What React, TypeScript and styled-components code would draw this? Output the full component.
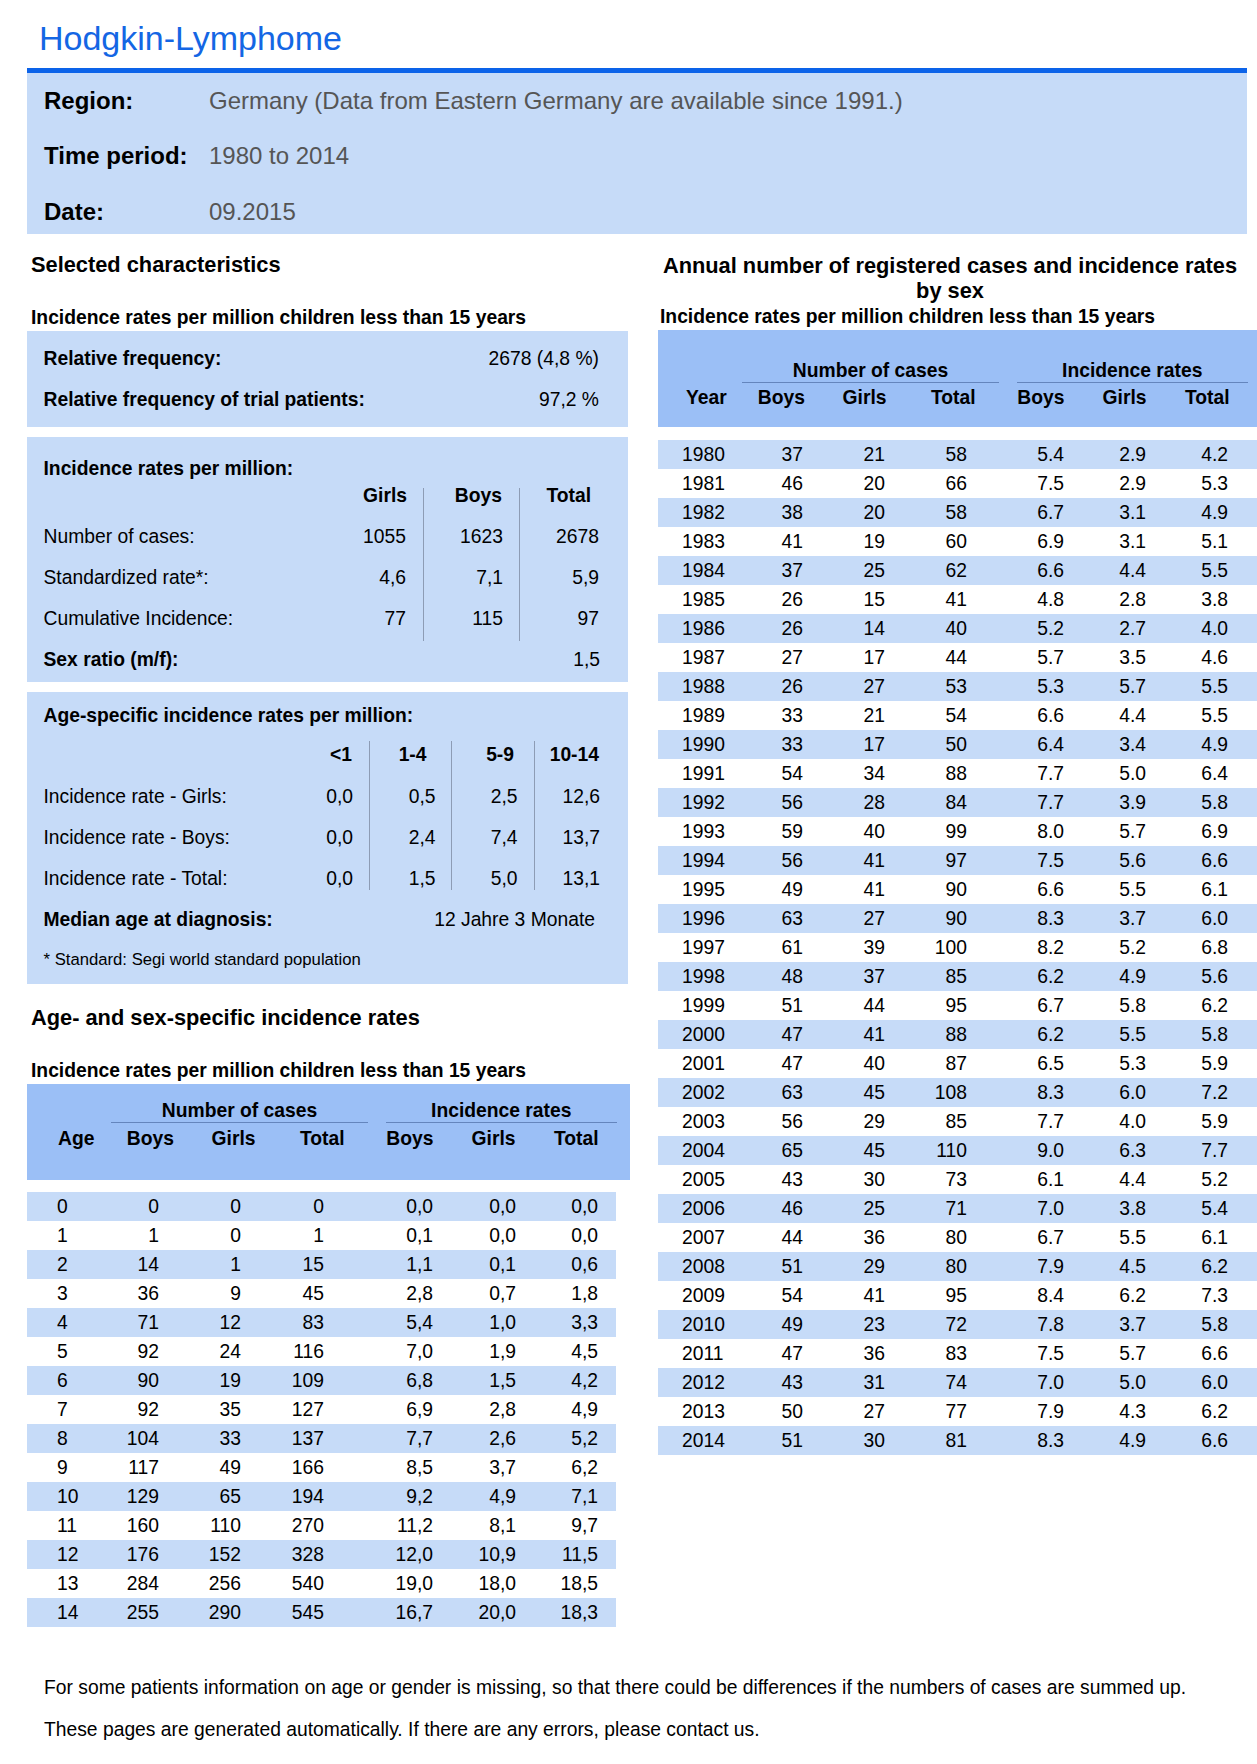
import React from "react";
import styled, { createGlobalStyle } from "styled-components";

const C = {
  light: "#c6dbf8",
  mid: "#9bbff6",
  blue: "#1466e4",
  rule: "#0c63e9",
  gray: "#555555",
  divider: "#8d9cb5",
  underline: "#6485bd",
};

const GlobalStyle = createGlobalStyle`
  html, body { margin: 0; padding: 0; overflow: hidden; background: #ffffff; }
  body { font-family: "Liberation Sans", Arial, Helvetica, sans-serif; color: #000; }
  * { box-sizing: border-box; }
`;

const Page = styled.div`
  width: 1257px;
  padding-left: 27px;
`;

const Title = styled.h1`
  margin: 18px 0 10px 12px;
  font-size: 34px;
  line-height: 40px;
  font-weight: 400;
  color: ${C.blue};
`;

const InfoBand = styled.section`
  width: 1220px;
  height: 166px;
  border-top: 5px solid ${C.rule};
  background: ${C.light};
  padding: 0 0 0 17px;
  display: grid;
  grid-template-columns: 165px 1fr;
  grid-auto-rows: 55.5px;
  align-items: center;
`;

const InfoLabel = styled.div`
  font-size: 24px;
  line-height: 28px;
  font-weight: 700;
`;

const InfoValue = styled.div`
  font-size: 24px;
  line-height: 28px;
  color: ${C.gray};
`;

const Columns = styled.div`
  display: flex;
  gap: 30px;
  align-items: flex-start;
`;

const LeftCol = styled.div`
  width: 601px;
  display: flex;
  flex-direction: column;
`;

const RightCol = styled.div`
  width: 584px;
  display: flex;
  flex-direction: column;
`;

const SectionTitle = styled.h2<{ $mt: number }>`
  margin: ${(p) => p.$mt}px 0 0;
  padding-left: 4px;
  font-size: 21.8px;
  line-height: 26px;
  font-weight: 700;
`;

const CenteredTitle = styled.h2`
  margin: 18.5px 0 0;
  font-size: 21.8px;
  line-height: 25px;
  font-weight: 700;
  text-align: center;
`;

const SubTitle = styled.h3<{ $mt: number; $pl: number }>`
  margin: ${(p) => p.$mt}px 0 0;
  padding-left: ${(p) => p.$pl}px;
  font-size: 19.3px;
  line-height: 24px;
  font-weight: 700;
  white-space: nowrap;
`;

const Panel = styled.div<{ $mt: number; $pt: number; $pb: number }>`
  margin-top: ${(p) => p.$mt}px;
  background: ${C.light};
  padding: ${(p) => p.$pt}px 28px ${(p) => p.$pb}px 16.5px;
  font-size: 19.3px;
`;

const PanelHeading = styled.div<{ $mb: number }>`
  font-weight: 700;
  line-height: 27px;
  margin-bottom: ${(p) => p.$mb}px;
`;

const FreqGrid = styled.div`
  display: grid;
  grid-template-columns: 1fr auto;
  grid-auto-rows: 41px;
  align-items: center;
  line-height: 24px;
`;

const BoldLabel = styled.div`
  font-weight: 700;
`;

const FreqValue = styled.div`
  text-align: right;
  padding-right: 1px;
`;

const StatGrid = styled.div<{ $cols: string; $rows: string }>`
  display: grid;
  grid-template-columns: ${(p) => p.$cols};
  grid-template-rows: ${(p) => p.$rows};
  line-height: 24px;
`;

const HeadCell = styled.div<{ $pad: number }>`
  align-self: start;
  line-height: 28px;
  font-weight: 700;
  text-align: right;
  padding-right: ${(p) => p.$pad}px;
`;

const BlankCell = styled.div``;

const RowLabel = styled.div<{ $bold?: boolean }>`
  align-self: center;
  font-weight: ${(p) => (p.$bold ? 700 : 400)};
  white-space: nowrap;
`;

const NumCell = styled.div<{ $pad: number; $col?: string }>`
  align-self: center;
  text-align: right;
  padding-right: ${(p) => p.$pad}px;
  white-space: nowrap;
  ${(p) => (p.$col ? `grid-column: ${p.$col};` : "")}
`;

const Divider = styled.div<{ $col: number; $span: number; $top: number; $bottom: number }>`
  grid-column: ${(p) => p.$col};
  grid-row: 1 / span ${(p) => p.$span};
  width: 1px;
  background: ${C.divider};
  margin-top: ${(p) => p.$top}px;
  margin-bottom: ${(p) => p.$bottom}px;
`;

const Footnote = styled.div`
  grid-column: 1 / -1;
  align-self: center;
  font-size: 16.7px;
  line-height: 22px;
`;

/* ---------- data tables ---------- */

const HEAD_COLS = "90px 57px 81.5px 89px 89px 82px 83px";

const TableHead = styled.div<{ $mt: number; $pt: number; $h: number; $w: number }>`
  margin-top: ${(p) => p.$mt}px;
  width: ${(p) => p.$w}px;
  height: ${(p) => p.$h}px;
  padding-top: ${(p) => p.$pt}px;
  background: ${C.mid};
  font-size: 19.3px;
  font-weight: 700;
  flex-shrink: 0;
`;

const GroupRow = styled.div`
  display: grid;
  grid-template-columns: 84px 257px 17.5px 231.5px;
  line-height: 22px;
`;

const GroupCell = styled.div<{ $col: number }>`
  grid-column: ${(p) => p.$col};
  text-align: center;
  border-bottom: 1px solid ${C.underline};
  white-space: nowrap;
`;

const SubRow = styled.div`
  display: grid;
  grid-template-columns: ${HEAD_COLS};
  line-height: 22px;
  margin-top: 4.5px;
`;

const SubFirst = styled.div<{ $pl: number }>`
  padding-left: ${(p) => p.$pl}px;
`;

const SubCell = styled.div`
  text-align: right;
`;

const Rows = styled.div<{ $mt: number; $w: number }>`
  margin-top: ${(p) => p.$mt}px;
  width: ${(p) => p.$w}px;
  flex-shrink: 0;
  font-size: 19.3px;
`;

const DataRow = styled.div<{ $cols: string; $shade: boolean }>`
  display: grid;
  grid-template-columns: ${(p) => p.$cols};
  height: 29px;
  line-height: 29px;
  background: ${(p) => (p.$shade ? C.light : "transparent")};
`;

const DataFirst = styled.div<{ $pl: number }>`
  padding-left: ${(p) => p.$pl}px;
`;

const DataCell = styled.div`
  text-align: right;
`;

const Footer = styled.div`
  padding-left: 17px;
  font-size: 19.3px;
  line-height: 24px;
`;

const FooterLine = styled.p<{ $mt: number }>`
  margin: ${(p) => p.$mt}px 0 0;
`;

/* ---------- data ---------- */

const ageRows: string[][] = [
  ["0", "0", "0", "0", "0,0", "0,0", "0,0"],
  ["1", "1", "0", "1", "0,1", "0,0", "0,0"],
  ["2", "14", "1", "15", "1,1", "0,1", "0,6"],
  ["3", "36", "9", "45", "2,8", "0,7", "1,8"],
  ["4", "71", "12", "83", "5,4", "1,0", "3,3"],
  ["5", "92", "24", "116", "7,0", "1,9", "4,5"],
  ["6", "90", "19", "109", "6,8", "1,5", "4,2"],
  ["7", "92", "35", "127", "6,9", "2,8", "4,9"],
  ["8", "104", "33", "137", "7,7", "2,6", "5,2"],
  ["9", "117", "49", "166", "8,5", "3,7", "6,2"],
  ["10", "129", "65", "194", "9,2", "4,9", "7,1"],
  ["11", "160", "110", "270", "11,2", "8,1", "9,7"],
  ["12", "176", "152", "328", "12,0", "10,9", "11,5"],
  ["13", "284", "256", "540", "19,0", "18,0", "18,5"],
  ["14", "255", "290", "545", "16,7", "20,0", "18,3"],
];

const yearRows: string[][] = [
  ["1980", "37", "21", "58", "5.4", "2.9", "4.2"],
  ["1981", "46", "20", "66", "7.5", "2.9", "5.3"],
  ["1982", "38", "20", "58", "6.7", "3.1", "4.9"],
  ["1983", "41", "19", "60", "6.9", "3.1", "5.1"],
  ["1984", "37", "25", "62", "6.6", "4.4", "5.5"],
  ["1985", "26", "15", "41", "4.8", "2.8", "3.8"],
  ["1986", "26", "14", "40", "5.2", "2.7", "4.0"],
  ["1987", "27", "17", "44", "5.7", "3.5", "4.6"],
  ["1988", "26", "27", "53", "5.3", "5.7", "5.5"],
  ["1989", "33", "21", "54", "6.6", "4.4", "5.5"],
  ["1990", "33", "17", "50", "6.4", "3.4", "4.9"],
  ["1991", "54", "34", "88", "7.7", "5.0", "6.4"],
  ["1992", "56", "28", "84", "7.7", "3.9", "5.8"],
  ["1993", "59", "40", "99", "8.0", "5.7", "6.9"],
  ["1994", "56", "41", "97", "7.5", "5.6", "6.6"],
  ["1995", "49", "41", "90", "6.6", "5.5", "6.1"],
  ["1996", "63", "27", "90", "8.3", "3.7", "6.0"],
  ["1997", "61", "39", "100", "8.2", "5.2", "6.8"],
  ["1998", "48", "37", "85", "6.2", "4.9", "5.6"],
  ["1999", "51", "44", "95", "6.7", "5.8", "6.2"],
  ["2000", "47", "41", "88", "6.2", "5.5", "5.8"],
  ["2001", "47", "40", "87", "6.5", "5.3", "5.9"],
  ["2002", "63", "45", "108", "8.3", "6.0", "7.2"],
  ["2003", "56", "29", "85", "7.7", "4.0", "5.9"],
  ["2004", "65", "45", "110", "9.0", "6.3", "7.7"],
  ["2005", "43", "30", "73", "6.1", "4.4", "5.2"],
  ["2006", "46", "25", "71", "7.0", "3.8", "5.4"],
  ["2007", "44", "36", "80", "6.7", "5.5", "6.1"],
  ["2008", "51", "29", "80", "7.9", "4.5", "6.2"],
  ["2009", "54", "41", "95", "8.4", "6.2", "7.3"],
  ["2010", "49", "23", "72", "7.8", "3.7", "5.8"],
  ["2011", "47", "36", "83", "7.5", "5.7", "6.6"],
  ["2012", "43", "31", "74", "7.0", "5.0", "6.0"],
  ["2013", "50", "27", "77", "7.9", "4.3", "6.2"],
  ["2014", "51", "30", "81", "8.3", "4.9", "6.6"],
];

const SUBHEADS = ["Boys", "Girls", "Total", "Boys", "Girls", "Total"];

type DataTableProps = {
  first: string;
  rows: string[][];
  head: { mt: number; pt: number; h: number; w: number; firstPl: number };
  body: { mt: number; w: number; cols: string; firstPl: number };
};

function DataTable({ first, rows, head, body }: DataTableProps) {
  return (
    <>
      <TableHead $mt={head.mt} $pt={head.pt} $h={head.h} $w={head.w}>
        <GroupRow>
          <GroupCell $col={2}>Number of cases</GroupCell>
          <GroupCell $col={4}>Incidence rates</GroupCell>
        </GroupRow>
        <SubRow>
          <SubFirst $pl={head.firstPl}>{first}</SubFirst>
          {SUBHEADS.map((s, i) => (
            <SubCell key={i}>{s}</SubCell>
          ))}
        </SubRow>
      </TableHead>
      <Rows $mt={body.mt} $w={body.w}>
        {rows.map((r, i) => (
          <DataRow key={r[0]} $cols={body.cols} $shade={i % 2 === 0}>
            <DataFirst $pl={body.firstPl}>{r[0]}</DataFirst>
            {r.slice(1).map((v, j) => (
              <DataCell key={j}>{v}</DataCell>
            ))}
          </DataRow>
        ))}
      </Rows>
    </>
  );
}

export default function App() {
  return (
    <Page>
      <GlobalStyle />
      <Title>Hodgkin-Lymphome</Title>
      <InfoBand>
        <InfoLabel>Region:</InfoLabel>
        <InfoValue>Germany (Data from Eastern Germany are available since 1991.)</InfoValue>
        <InfoLabel>Time period:</InfoLabel>
        <InfoValue>1980 to 2014</InfoValue>
        <InfoLabel>Date:</InfoLabel>
        <InfoValue>09.2015</InfoValue>
      </InfoBand>

      <Columns>
        <LeftCol>
          <SectionTitle $mt={17.5}>Selected characteristics</SectionTitle>
          <SubTitle $mt={28} $pl={4}>
            Incidence rates per million children less than 15 years
          </SubTitle>

          <Panel $mt={1.5} $pt={7.5} $pb={6.5}>
            <FreqGrid>
              <BoldLabel>Relative frequency:</BoldLabel>
              <FreqValue>2678 (4,8 %)</FreqValue>
              <BoldLabel>Relative frequency of trial patients:</BoldLabel>
              <FreqValue>97,2 %</FreqValue>
            </FreqGrid>
          </Panel>

          <Panel $mt={10} $pt={17.5} $pb={1.5}>
            <PanelHeading $mb={0}>Incidence rates per million:</PanelHeading>
            <StatGrid $cols="1fr 96px 1px 95px 1px 80px" $rows="35px 41px 41px 41px 41px">
              <Divider $col={3} $span={4} $top={6.5} $bottom={-1.5} />
              <Divider $col={5} $span={4} $top={6.5} $bottom={-1.5} />
              <BlankCell />
              <HeadCell $pad={16}>Girls</HeadCell>
              <HeadCell $pad={17}>Boys</HeadCell>
              <HeadCell $pad={9}>Total</HeadCell>

              <RowLabel>Number of cases:</RowLabel>
              <NumCell $pad={17}>1055</NumCell>
              <NumCell $pad={16}>1623</NumCell>
              <NumCell $pad={1}>2678</NumCell>

              <RowLabel>Standardized rate*:</RowLabel>
              <NumCell $pad={17}>4,6</NumCell>
              <NumCell $pad={16}>7,1</NumCell>
              <NumCell $pad={1}>5,9</NumCell>

              <RowLabel>Cumulative Incidence:</RowLabel>
              <NumCell $pad={17}>77</NumCell>
              <NumCell $pad={16}>115</NumCell>
              <NumCell $pad={1}>97</NumCell>

              <RowLabel $bold>Sex ratio (m/f):</RowLabel>
              <NumCell $pad={0} $col="6">1,5</NumCell>
            </StatGrid>
          </Panel>

          <Panel $mt={10} $pt={9.5} $pb={4.5}>
            <PanelHeading $mb={12.5}>Age-specific incidence rates per million:</PanelHeading>
            <StatGrid
              $cols="1fr 82px 1px 81.5px 1px 81.5px 1px 65.5px"
              $rows="35.5px 41px 41px 41px 41px 39px"
            >
              <Divider $col={3} $span={4} $top={0} $bottom={9.5} />
              <Divider $col={5} $span={4} $top={0} $bottom={9.5} />
              <Divider $col={7} $span={4} $top={0} $bottom={9.5} />
              <BlankCell />
              <HeadCell $pad={16.5}>&lt;1</HeadCell>
              <HeadCell $pad={24.5}>1-4</HeadCell>
              <HeadCell $pad={19.5}>5-9</HeadCell>
              <HeadCell $pad={1}>10-14</HeadCell>

              <RowLabel>Incidence rate - Girls:</RowLabel>
              <NumCell $pad={15.5}>0,0</NumCell>
              <NumCell $pad={15.5}>0,5</NumCell>
              <NumCell $pad={16}>2,5</NumCell>
              <NumCell $pad={0}>12,6</NumCell>

              <RowLabel>Incidence rate - Boys:</RowLabel>
              <NumCell $pad={15.5}>0,0</NumCell>
              <NumCell $pad={15.5}>2,4</NumCell>
              <NumCell $pad={16}>7,4</NumCell>
              <NumCell $pad={0}>13,7</NumCell>

              <RowLabel>Incidence rate - Total:</RowLabel>
              <NumCell $pad={15.5}>0,0</NumCell>
              <NumCell $pad={15.5}>1,5</NumCell>
              <NumCell $pad={16}>5,0</NumCell>
              <NumCell $pad={0}>13,1</NumCell>

              <RowLabel $bold>Median age at diagnosis:</RowLabel>
              <NumCell $pad={5} $col="2 / -1">12 Jahre 3 Monate</NumCell>

              <Footnote>* Standard: Segi world standard population</Footnote>
            </StatGrid>
          </Panel>

          <SectionTitle $mt={21}>Age- and sex-specific incidence rates</SectionTitle>
          <SubTitle $mt={28} $pl={4}>
            Incidence rates per million children less than 15 years
          </SubTitle>
          <DataTable
            first="Age"
            rows={ageRows}
            head={{ mt: 1, pt: 16, h: 96, w: 603, firstPl: 31 }}
            body={{ mt: 12, w: 589, cols: "90px 42px 82px 83px 109px 83px 82px", firstPl: 30 }}
          />
        </LeftCol>

        <RightCol>
          <CenteredTitle>Annual number of registered cases and incidence rates by sex</CenteredTitle>
          <SubTitle $mt={2.5} $pl={2}>
            Incidence rates per million children less than 15 years
          </SubTitle>
          <DataTable
            first="Year"
            rows={yearRows}
            head={{ mt: 1, pt: 29.5, h: 97, w: 620, firstPl: 28 }}
            body={{ mt: 13, w: 620, cols: "90px 55px 82px 82px 97px 82px 82px", firstPl: 24 }}
          />
        </RightCol>
      </Columns>

      <Footer>
        <FooterLine $mt={49}>
          For some patients information on age or gender is missing, so that there could be
          differences if the numbers of cases are summed up.
        </FooterLine>
        <FooterLine $mt={18}>
          These pages are generated automatically. If there are any errors, please contact us.
        </FooterLine>
      </Footer>
    </Page>
  );
}
